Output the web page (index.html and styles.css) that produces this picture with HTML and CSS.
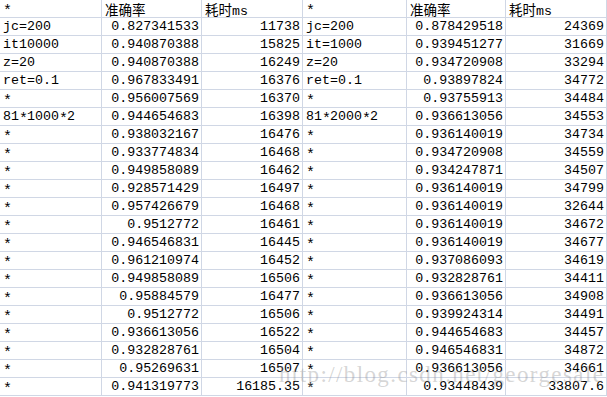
FILE: index.html
```html
<!DOCTYPE html>
<html>
<head>
<meta charset="utf-8">
<link rel="stylesheet" href="styles.css">
</head>
<body>
<div class="sheet">
  <div class="grid">
    <div class="c h"><span class="a">*</span></div><div class="c h"><span class="cjk">准确率</span></div><div class="c h"><span class="cjk">耗时</span>ms</div><div class="c h"><span class="a">*</span></div><div class="c h"><span class="cjk">准确率</span></div><div class="c h"><span class="cjk">耗时</span>ms</div>
    <div class="c">jc=200</div><div class="c r">0.827341533</div><div class="c r">11738</div><div class="c">jc=200</div><div class="c r">0.878429518</div><div class="c r">24369</div>
    <div class="c">it10000</div><div class="c r">0.940870388</div><div class="c r">15825</div><div class="c">it=1000</div><div class="c r">0.939451277</div><div class="c r">31669</div>
    <div class="c">z=20</div><div class="c r">0.940870388</div><div class="c r">16249</div><div class="c">z=20</div><div class="c r">0.934720908</div><div class="c r">33294</div>
    <div class="c">ret=0.1</div><div class="c r">0.967833491</div><div class="c r">16376</div><div class="c">ret=0.1</div><div class="c r">0.93897824</div><div class="c r">34772</div>
    <div class="c"><span class="a">*</span></div><div class="c r">0.956007569</div><div class="c r">16370</div><div class="c"><span class="a">*</span></div><div class="c r">0.93755913</div><div class="c r">34484</div>
    <div class="c">81<span class="a">*</span>1000<span class="a">*</span>2</div><div class="c r">0.944654683</div><div class="c r">16398</div><div class="c">81<span class="a">*</span>2000<span class="a">*</span>2</div><div class="c r">0.936613056</div><div class="c r">34553</div>
    <div class="c"><span class="a">*</span></div><div class="c r">0.938032167</div><div class="c r">16476</div><div class="c"><span class="a">*</span></div><div class="c r">0.936140019</div><div class="c r">34734</div>
    <div class="c"><span class="a">*</span></div><div class="c r">0.933774834</div><div class="c r">16468</div><div class="c"><span class="a">*</span></div><div class="c r">0.934720908</div><div class="c r">34559</div>
    <div class="c"><span class="a">*</span></div><div class="c r">0.949858089</div><div class="c r">16462</div><div class="c"><span class="a">*</span></div><div class="c r">0.934247871</div><div class="c r">34507</div>
    <div class="c"><span class="a">*</span></div><div class="c r">0.928571429</div><div class="c r">16497</div><div class="c"><span class="a">*</span></div><div class="c r">0.936140019</div><div class="c r">34799</div>
    <div class="c"><span class="a">*</span></div><div class="c r">0.957426679</div><div class="c r">16468</div><div class="c"><span class="a">*</span></div><div class="c r">0.936140019</div><div class="c r">32644</div>
    <div class="c"><span class="a">*</span></div><div class="c r">0.9512772</div><div class="c r">16461</div><div class="c"><span class="a">*</span></div><div class="c r">0.936140019</div><div class="c r">34672</div>
    <div class="c"><span class="a">*</span></div><div class="c r">0.946546831</div><div class="c r">16445</div><div class="c"><span class="a">*</span></div><div class="c r">0.936140019</div><div class="c r">34677</div>
    <div class="c"><span class="a">*</span></div><div class="c r">0.961210974</div><div class="c r">16452</div><div class="c"><span class="a">*</span></div><div class="c r">0.937086093</div><div class="c r">34619</div>
    <div class="c"><span class="a">*</span></div><div class="c r">0.949858089</div><div class="c r">16506</div><div class="c"><span class="a">*</span></div><div class="c r">0.932828761</div><div class="c r">34411</div>
    <div class="c"><span class="a">*</span></div><div class="c r">0.95884579</div><div class="c r">16477</div><div class="c"><span class="a">*</span></div><div class="c r">0.936613056</div><div class="c r">34908</div>
    <div class="c"><span class="a">*</span></div><div class="c r">0.9512772</div><div class="c r">16506</div><div class="c"><span class="a">*</span></div><div class="c r">0.939924314</div><div class="c r">34491</div>
    <div class="c"><span class="a">*</span></div><div class="c r">0.936613056</div><div class="c r">16522</div><div class="c"><span class="a">*</span></div><div class="c r">0.944654683</div><div class="c r">34457</div>
    <div class="c"><span class="a">*</span></div><div class="c r">0.932828761</div><div class="c r">16504</div><div class="c"><span class="a">*</span></div><div class="c r">0.946546831</div><div class="c r">34872</div>
    <div class="c"><span class="a">*</span></div><div class="c r">0.95269631</div><div class="c r">16507</div><div class="c"><span class="a">*</span></div><div class="c r">0.936613056</div><div class="c r">34661</div>
    <div class="c"><span class="a">*</span></div><div class="c r">0.941319773</div><div class="c r">16185.35</div><div class="c"><span class="a">*</span></div><div class="c r">0.93448439</div><div class="c r">33807.6</div>
  </div>
  <div class="watermark">http://blog.csdn.net/georgesale</div>
</div>
</body>
</html>
```
FILE: styles.css
```css
html, body {
  margin: 0;
  padding: 0;
  background: #ffffff;
}
.sheet {
  position: relative;
  width: 607px;
  height: 397px;
  overflow: hidden;
}
.grid {
  display: grid;
  grid-template-columns: 102px 100px 101px 104px 99px 101px;
  grid-template-rows: repeat(22, 18px);
}
.c {
  box-sizing: border-box;
  border-right: 1px solid #d0d7e5;
  border-bottom: 1px solid #d0d7e5;
  font-family: "Liberation Mono", "Noto Sans CJK SC", monospace;
  font-size: 13.3px;
  line-height: 17px;
  color: #000;
  padding: 0 2px 0 3px;
  white-space: nowrap;
}
.h {
  padding-top: 2px;
  line-height: 15px;
}
.r {
  text-align: right;
}
.a {
  display: inline-block;
  width: 8px;
  font-size: 15px;
  line-height: 17px;
  vertical-align: top;
  text-align: center;
  transform: translateY(3px);
}
.h .a {
  transform: translateY(1px);
}
.cjk {
  font-family: "Noto Sans CJK SC", sans-serif;
  font-size: 13.5px;
  line-height: 15px;
}
.watermark {
  position: absolute;
  left: 279px;
  top: 363px;
  font-family: "Liberation Serif", serif;
  font-size: 23px;
  line-height: 23px;
  letter-spacing: 1.4px;
  color: rgba(150, 150, 150, 0.4);
  white-space: nowrap;
}
```
